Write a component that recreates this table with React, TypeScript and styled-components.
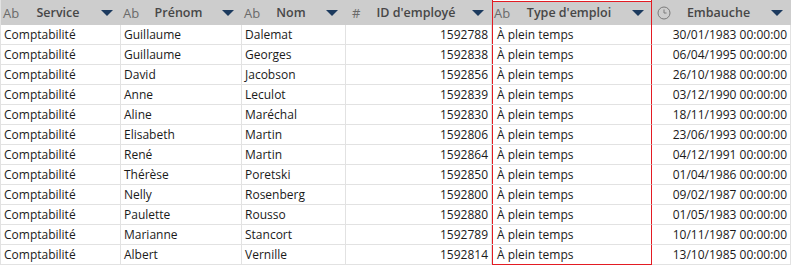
import styled, { createGlobalStyle } from 'styled-components';

const GlobalStyle = createGlobalStyle`
  html, body {
    margin: 0;
    padding: 0;
    background: #ffffff;
  }
  body {
    font-family: "Open Sans", "Noto Sans", "Liberation Sans", sans-serif;
  }
`;

type Kind = 'text' | 'number' | 'date';

interface Column {
  key: string;
  label: string;
  kind: Kind;
  width: number;
}

const columns: Column[] = [
  { key: 'service', label: 'Service', kind: 'text', width: 120 },
  { key: 'prenom', label: 'Prénom', kind: 'text', width: 121 },
  { key: 'nom', label: 'Nom', kind: 'text', width: 104 },
  { key: 'id', label: "ID d'employé", kind: 'number', width: 146 },
  { key: 'type', label: "Type d'emploi", kind: 'text', width: 160 },
  { key: 'embauche', label: 'Embauche', kind: 'date', width: 139 },
];

const rows = [
  ['Comptabilité', 'Guillaume', 'Dalemat', '1592788', 'À plein temps', '30/01/1983 00:00:00'],
  ['Comptabilité', 'Guillaume', 'Georges', '1592838', 'À plein temps', '06/04/1995 00:00:00'],
  ['Comptabilité', 'David', 'Jacobson', '1592856', 'À plein temps', '26/10/1988 00:00:00'],
  ['Comptabilité', 'Anne', 'Leculot', '1592839', 'À plein temps', '03/12/1990 00:00:00'],
  ['Comptabilité', 'Aline', 'Maréchal', '1592830', 'À plein temps', '18/11/1993 00:00:00'],
  ['Comptabilité', 'Elisabeth', 'Martin', '1592806', 'À plein temps', '23/06/1993 00:00:00'],
  ['Comptabilité', 'René', 'Martin', '1592864', 'À plein temps', '04/12/1991 00:00:00'],
  ['Comptabilité', 'Thérèse', 'Poretski', '1592850', 'À plein temps', '01/04/1986 00:00:00'],
  ['Comptabilité', 'Nelly', 'Rosenberg', '1592800', 'À plein temps', '09/02/1987 00:00:00'],
  ['Comptabilité', 'Paulette', 'Rousso', '1592880', 'À plein temps', '01/05/1983 00:00:00'],
  ['Comptabilité', 'Marianne', 'Stancort', '1592789', 'À plein temps', '10/11/1987 00:00:00'],
  ['Comptabilité', 'Albert', 'Vernille', '1592814', 'À plein temps', '13/10/1985 00:00:00'],
];

const SELECTED = 4;
const RED = '#e31b23';
const LINE = '#e2e2e2';

const Grid = styled.div<{ $template: string }>`
  display: grid;
  grid-template-columns: ${(p) => p.$template};
  width: 791px;
  border-left: 1px solid ${LINE};
  font-size: 12px;
  color: #1a1a1a;
`;

const HeaderCell = styled.div<{ $selected: boolean }>`
  height: 25px;
  background: #cdcdcd;
  display: grid;
  grid-template-columns: 1fr auto 1fr;
  align-items: center;
  padding: 0 8px 0 2px;
  box-sizing: border-box;
  box-shadow: ${(p) =>
    p.$selected
      ? `inset 1px 0 ${RED}, inset -1px 0 ${RED}, inset 0 1px #ffffff, inset 0 2px ${RED}`
      : 'none'};
`;

const TypeIcon = styled.span<{ $indent: number }>`
  justify-self: start;
  display: flex;
  align-items: center;
  padding-left: ${(p) => p.$indent}px;
  font-size: 13px;
  color: #6a6a6a;
`;

const HeaderLabel = styled.span`
  font-weight: 600;
  font-size: 12.5px;
  color: #474747;
`;

const SortArrow = styled.span`
  justify-self: end;
  width: 0;
  height: 0;
  margin-top: 1px;
  border-left: 6px solid transparent;
  border-right: 6px solid transparent;
  border-top: 6px solid #1c3a5e;
`;

const Cell = styled.div<{ $align: 'left' | 'right'; $selected: boolean; $last: boolean }>`
  height: 20px;
  box-sizing: border-box;
  border-right: 1px solid ${(p) => (p.$selected ? RED : LINE)};
  border-bottom: 1px solid ${(p) => (p.$selected && p.$last ? RED : LINE)};
  box-shadow: ${(p) => (p.$selected ? `inset 1px 0 ${RED}` : 'none')};
  padding: 0 ${(p) => (p.$align === 'right' ? '3px' : '3px')} 0
    ${(p) => (p.$selected ? '5px' : '3px')};
  display: flex;
  align-items: center;
  justify-content: ${(p) => (p.$align === 'right' ? 'flex-end' : 'flex-start')};
  white-space: nowrap;
  overflow: hidden;
`;

function ClockIcon() {
  return (
    <svg width="14" height="14" viewBox="0 0 14 14" fill="none" stroke="#7a7a7a" strokeWidth="1">
      <circle cx="7" cy="7" r="6" />
      <path d="M7 3.5 V7 L9.5 7" />
    </svg>
  );
}

function iconFor(kind: Kind) {
  if (kind === 'number') return <TypeIcon $indent={4}>#</TypeIcon>;
  if (kind === 'date')
    return (
      <TypeIcon $indent={3}>
        <ClockIcon />
      </TypeIcon>
    );
  return <TypeIcon $indent={0}>Ab</TypeIcon>;
}

export default function App() {
  const template = columns.map((c, i) => `${i === 0 ? c.width : c.width}px`).join(' ');

  return (
    <>
      <GlobalStyle />
      <Grid $template={template}>
        {columns.map((c, ci) => (
          <HeaderCell key={c.key} $selected={ci === SELECTED}>
            {iconFor(c.kind)}
            <HeaderLabel>{c.label}</HeaderLabel>
            <SortArrow />
          </HeaderCell>
        ))}
        {rows.map((r, ri) =>
          r.map((v, ci) => (
            <Cell
              key={`${ri}-${ci}`}
              $align={columns[ci].kind === 'text' ? 'left' : 'right'}
              $selected={ci === SELECTED}
              $last={ri === rows.length - 1}
            >
              {v}
            </Cell>
          ))
        )}
      </Grid>
    </>
  );
}
